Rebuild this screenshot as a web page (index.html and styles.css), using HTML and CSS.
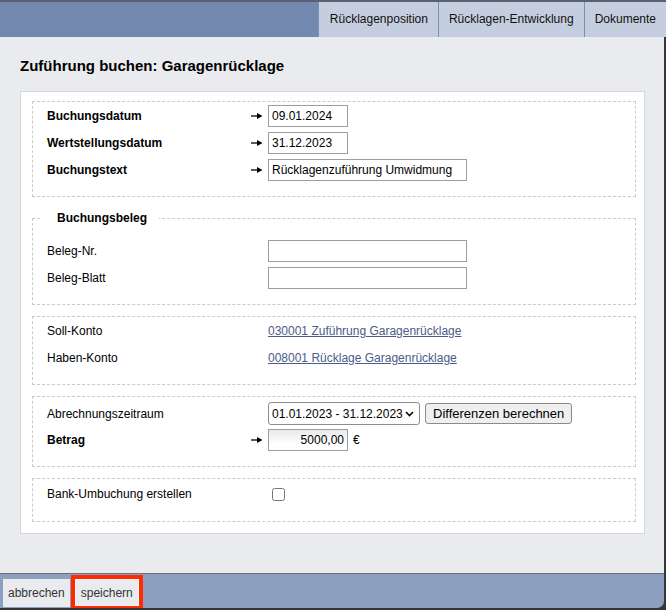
FILE: index.html
```html
<!DOCTYPE html>
<html lang="de">
<head>
    <meta charset="UTF-8">
    <meta name="viewport" content="width=device-width, initial-scale=1.0">
    <title>Zuführung buchen</title>
    <link rel="stylesheet" href="styles.css">
</head>
<body>

    <div class="window">
        <!-- Tabs -->
        <div class="topbar">
            <div class="tab">Rücklagenposition</div>
            <div class="tab">Rücklagen-Entwicklung</div>
            <div class="tab">Dokumente</div>
        </div>

        <div class="content">
            <h1 class="title">Zuführung buchen: Garagenrücklage</h1>

            <form class="panel">
                <fieldset class="group">
                    <div class="row">
                        <label class="label required">Buchungsdatum</label>
                        <span class="arrow"><svg width="12" height="8" viewBox="0 0 12 8"><path d="M0 4H8" stroke="#000" stroke-width="1.3"/><path d="M6 1L11.5 4L6 7Z" fill="#000"/></svg></span>
                        <input class="field short" type="text" value="09.01.2024">
                    </div>
                    <div class="row">
                        <label class="label required">Wertstellungsdatum</label>
                        <span class="arrow"><svg width="12" height="8" viewBox="0 0 12 8"><path d="M0 4H8" stroke="#000" stroke-width="1.3"/><path d="M6 1L11.5 4L6 7Z" fill="#000"/></svg></span>
                        <input class="field short" type="text" value="31.12.2023">
                    </div>
                    <div class="row">
                        <label class="label required">Buchungstext</label>
                        <span class="arrow"><svg width="12" height="8" viewBox="0 0 12 8"><path d="M0 4H8" stroke="#000" stroke-width="1.3"/><path d="M6 1L11.5 4L6 7Z" fill="#000"/></svg></span>
                        <input class="field long" type="text" value="Rücklagenzuführung Umwidmung">
                    </div>
                </fieldset>

                <fieldset class="group group-beleg">
                    <legend class="legend">Buchungsbeleg</legend>
                    <div class="row">
                        <label class="label">Beleg-Nr.</label>
                        <span></span>
                        <input class="field long" type="text">
                    </div>
                    <div class="row">
                        <label class="label">Beleg-Blatt</label>
                        <span></span>
                        <input class="field long" type="text">
                    </div>
                </fieldset>

                <fieldset class="group">
                    <div class="row">
                        <span class="label">Soll-Konto</span>
                        <span></span>
                        <a class="account" href="#">030001 Zuführung Garagenrücklage</a>
                    </div>
                    <div class="row">
                        <span class="label">Haben-Konto</span>
                        <span></span>
                        <a class="account" href="#">008001 Rücklage Garagenrücklage</a>
                    </div>
                </fieldset>

                <fieldset class="group group-period">
                    <div class="row">
                        <label class="label">Abrechnungszeitraum</label>
                        <span></span>
                        <div class="controls">
                            <span class="select-wrap">
                                <select class="select">
                                    <option>01.01.2023 - 31.12.2023</option>
                                </select>
                                <svg class="chevron" width="9" height="6" viewBox="0 0 9 6"><path d="M1 1L4.5 4.5L8 1" fill="none" stroke="#000" stroke-width="1.6"/></svg>
                            </span>
                            <button class="btn" type="button">Differenzen berechnen</button>
                        </div>
                    </div>
                    <div class="row">
                        <label class="label required">Betrag</label>
                        <span class="arrow"><svg width="12" height="8" viewBox="0 0 12 8"><path d="M0 4H8" stroke="#000" stroke-width="1.3"/><path d="M6 1L11.5 4L6 7Z" fill="#000"/></svg></span>
                        <div class="controls">
                            <input class="field amount" type="text" value="5000,00">
                            <span class="currency">€</span>
                        </div>
                    </div>
                </fieldset>

                <fieldset class="group group-bank">
                    <div class="row">
                        <label class="label">Bank-Umbuchung erstellen</label>
                        <span></span>
                        <input class="check" type="checkbox">
                    </div>
                </fieldset>
            </form>
        </div>

        <!-- Footer buttons -->
        <div class="footer">
            <button class="footer-btn" type="button">abbrechen</button>
            <button class="footer-btn save" type="button">speichern</button>
        </div>
    </div>

</body>
</html>
```

FILE: styles.css
```css
body {
    margin: 0;
    background: #34363c;
    font-family: "Liberation Sans", Arial, sans-serif;
    font-size: 12px;
    color: #000;
}

input, select, button {
    font: inherit;
    color: #000;
}

.window {
    width: 666px;
    height: 608px;
    display: flex;
    flex-direction: column;
}

/* Tabs */
.topbar {
    height: 35px;
    border-top: 2px solid #5a6171;
    background: #7489b0;
    display: flex;
    justify-content: flex-end;
}

.tab {
    padding: 0 10px;
    line-height: 35px;
    background: #c5cedf;
    border-left: 1px solid #7b8eb3;
    color: #111;
}

.tab:first-child {
    padding-left: 11px;
}

.content {
    flex: 1;
    margin-right: 2px;
    background: #eaebef;
    padding: 19px 19px 0 20px;
}

.title {
    margin: 0 0 16px;
    font-size: 15px;
    line-height: 19px;
    font-weight: bold;
}

.panel {
    margin: 0;
    background: #fff;
    border: 1px solid #d3d6dd;
    padding: 9px 8px 11px 11px;
}

/* Groups */
.group {
    margin: 0 0 11px;
    padding: 3px 14px 15px;
    border: 1px dashed #cbcbcb;
    min-width: 0;
}

.group:last-child {
    margin-bottom: 0;
}

.group-beleg {
    padding-top: 12px;
}

.group-period {
    padding-top: 5px;
}

.group-bank {
    padding-top: 4px;
    padding-bottom: 16px;
}

.legend {
    margin-left: -5px;
    padding: 0 12px 0 15px;
    font-weight: bold;
    line-height: 20px;
}

.row {
    display: grid;
    grid-template-columns: 204px 17px auto;
    align-items: center;
    height: 22px;
    margin-bottom: 5px;
}

.row:last-child {
    margin-bottom: 0;
}

.label.required {
    font-weight: bold;
}

.arrow {
    display: flex;
    align-items: center;
}

.field {
    box-sizing: border-box;
    height: 22px;
    border: 1px solid #9d9d9d;
    padding: 0 3px;
    background: #fff;
    outline: none;
}

.field.short {
    width: 80px;
}

.field.long {
    width: 199px;
}

.field.amount {
    width: 80px;
    text-align: right;
    background: linear-gradient(#e9e9e9, #fff 70%);
}

.account {
    color: #4b5b8a;
    text-decoration: underline;
}

.controls {
    display: flex;
    align-items: center;
}

.select-wrap {
    position: relative;
    display: inline-flex;
}

.select {
    appearance: none;
    -webkit-appearance: none;
    box-sizing: border-box;
    width: 152px;
    height: 23px;
    border: 1px solid #8e8e8e;
    border-radius: 3px;
    padding: 0 0 0 3px;
    background: #fff;
}

.chevron {
    position: absolute;
    right: 6px;
    top: 9px;
    pointer-events: none;
}

.btn {
    margin-left: 5px;
    height: 21px;
    padding: 0 7px;
    border: 1px solid #8a8a8a;
    border-radius: 3px;
    background: #efefef;
    font-size: 13px;
}

.currency {
    margin-left: 5px;
}

.check {
    margin: 0 0 0 4px;
    width: 13px;
    height: 13px;
}

/* Footer */
.footer {
    height: 34px;
    margin-right: 2px;
    border-top: 1px solid #6b6e77;
    background: #8da0c0;
    border-bottom-right-radius: 7px;
    display: flex;
    align-items: flex-start;
    padding-left: 3px;
}

.footer-btn {
    margin-top: 5px;
    height: 28px;
    padding: 0 5px;
    border: none;
    background: #eaebef;
    color: #333;
}

.save {
    margin-top: 1px;
    margin-left: 1px;
    height: 35px;
    padding: 0 6px;
    border: 4px solid #ff2a00;
    box-shadow: inset 0 0 0 1px #f7f7f9;
}
```
